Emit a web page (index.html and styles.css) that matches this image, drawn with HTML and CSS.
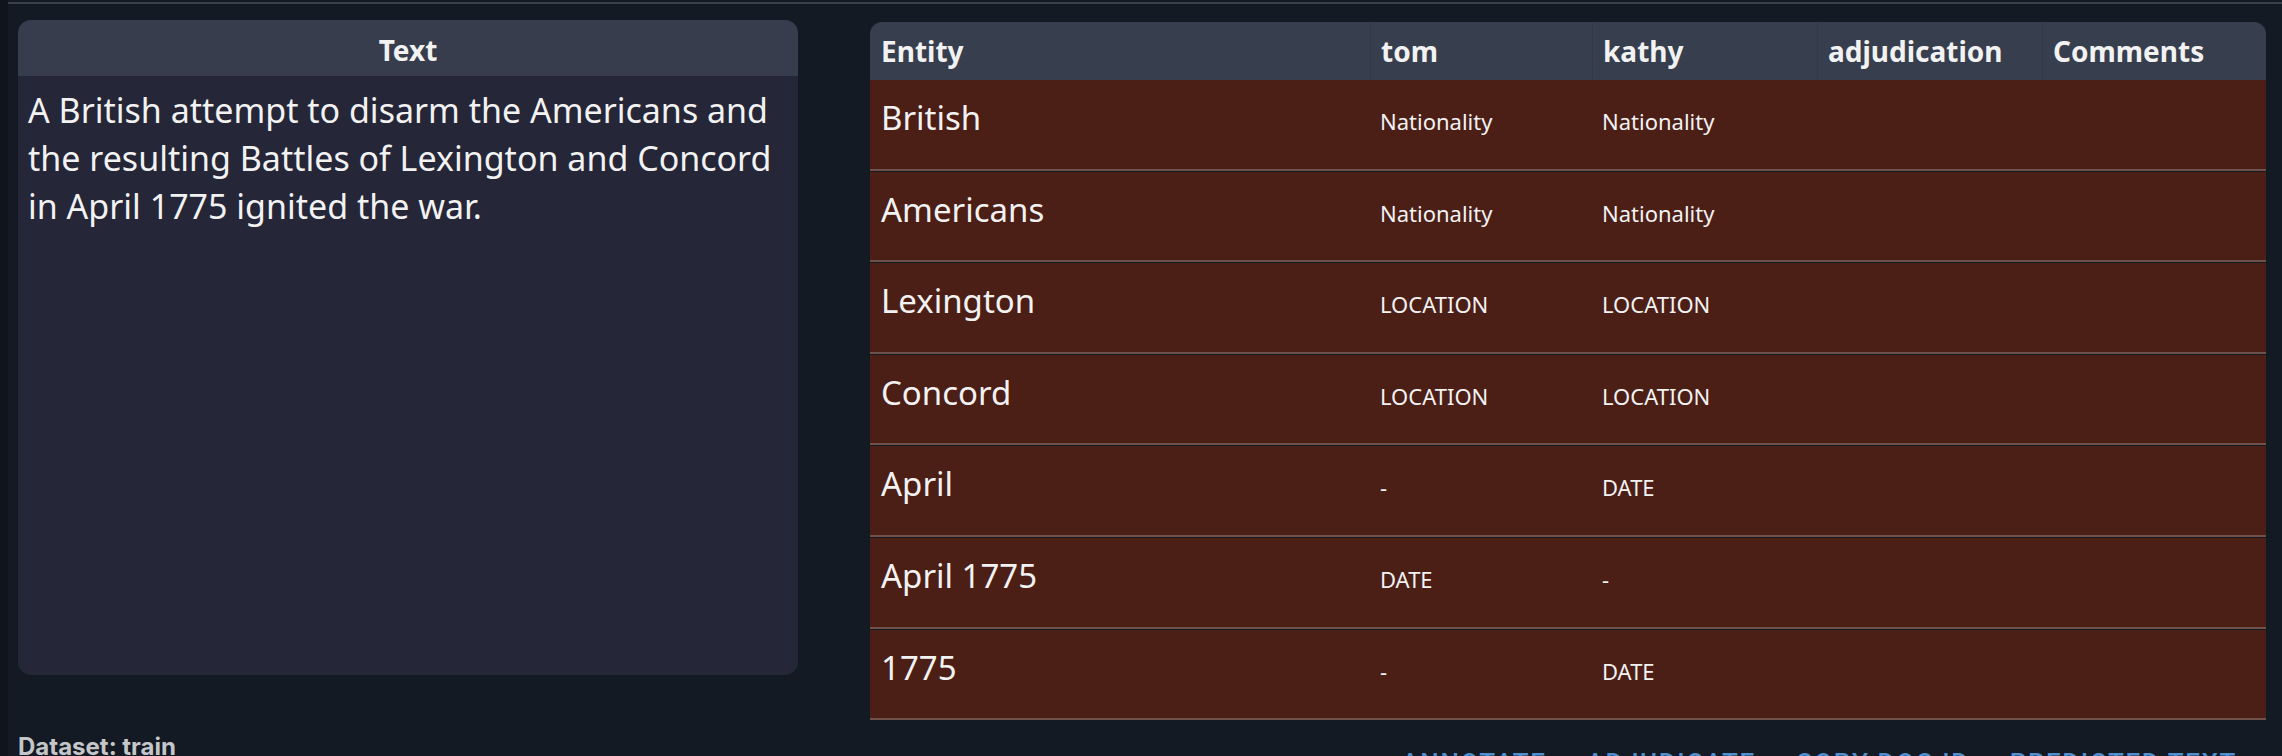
FILE: index.html
```html
<!DOCTYPE html>
<html lang="en">
<head>
  <meta charset="UTF-8">
  <title>Entity review</title>
  <link rel="stylesheet" href="styles.css">
</head>
<body>
  <div class="strip"></div>
  <div class="main">
    <div class="topbar"></div>
    <div class="content">
      <div class="left">
        <div class="card">
          <div class="card-head">Text</div>
          <div class="card-body">A British attempt to disarm the Americans and the resulting Battles of Lexington and Concord in April 1775 ignited the war.</div>
        </div>
        <div class="dataset">Dataset: train</div>
      </div>

      <div class="right">
        <table class="entities">
          <colgroup>
            <col style="width:500px">
            <col style="width:222px">
            <col style="width:225px">
            <col style="width:225px">
            <col>
          </colgroup>
          <thead>
            <tr><th>Entity</th><th>tom</th><th>kathy</th><th>adjudication</th><th>Comments</th></tr>
          </thead>
          <tbody>
            <tr><td class="ent">British</td><td>Nationality</td><td>Nationality</td><td></td><td></td></tr>
            <tr><td class="ent">Americans</td><td>Nationality</td><td>Nationality</td><td></td><td></td></tr>
            <tr><td class="ent">Lexington</td><td>LOCATION</td><td>LOCATION</td><td></td><td></td></tr>
            <tr><td class="ent">Concord</td><td>LOCATION</td><td>LOCATION</td><td></td><td></td></tr>
            <tr><td class="ent">April</td><td>-</td><td>DATE</td><td></td><td></td></tr>
            <tr><td class="ent">April 1775</td><td>DATE</td><td>-</td><td></td><td></td></tr>
            <tr><td class="ent">1775</td><td>-</td><td>DATE</td><td></td><td></td></tr>
          </tbody>
        </table>
        <div class="actions">
          <button class="link-btn">Annotate</button>
          <button class="link-btn">Adjudicate</button>
          <button class="link-btn">Copy Doc ID</button>
          <button class="link-btn">Predicted Text</button>
        </div>
      </div>
    </div>
  </div>
</body>
</html>
```

FILE: styles.css
```css
* {
  box-sizing: border-box;
}

body {
  margin: 0;
  height: 756px;
  overflow: hidden;
  display: flex;
  background: #141a23;
  color: #f2f2f2;
  font-family: "Noto Sans", sans-serif;
}

.strip {
  width: 8px;
  flex-shrink: 0;
  background: #10151b;
}

.main {
  flex: 1;
}

.topbar {
  height: 2px;
  margin-top: 2px;
  background: #39404c;
}

.content {
  display: flex;
  gap: 72px;
  padding: 16px 16px 0 10px;
}

/* left column */
.left {
  width: 780px;
  flex-shrink: 0;
}

.card {
  height: 655px;
  background: #252637;
  border-radius: 13px;
  overflow: hidden;
}

.card-head {
  height: 56px;
  padding-top: 4px;
  line-height: 52px;
  text-align: center;
  font-size: 28px;
  font-weight: 700;
  background: #373d4c;
}

.card-body {
  padding: 10px 10px;
  font-size: 34px;
  line-height: 48px;
}

.dataset {
  margin-top: 57px;
  font-family: Inter, sans-serif;
  font-weight: 700;
  font-size: 24px;
  color: #c4c6ca;
}

/* right column */
.right {
  flex: 1;
  margin-top: 2px;
}

.entities {
  width: 1396px;
  table-layout: fixed;
  border-collapse: separate;
  border-spacing: 0;
}

.entities th {
  height: 58px;
  padding: 0 11px;
  line-height: 58px;
  text-align: left;
  font-size: 28px;
  font-weight: 700;
  background: #373e4e;
}

.entities th + th {
  border-left: 1px solid #333948;
  padding-left: 10px;
}

.entities th:first-child {
  border-top-left-radius: 12px;
}

.entities th:last-child {
  border-top-right-radius: 12px;
}

.entities td {
  box-sizing: content-box;
  height: 73.6px;
  padding: 15px 10px 0;
  vertical-align: baseline;
  font-size: 22px;
  background: #4b1e16;
  border-bottom: 2px solid #6f504a;
}

.entities tbody tr + tr td {
  border-top: 1px solid #141a23;
}

.entities td.ent {
  padding-left: 11px;
  font-size: 33px;
}

.actions {
  display: flex;
  justify-content: flex-end;
  gap: 40px;
  margin-top: 28px;
  padding-right: 29px;
}

.link-btn {
  padding: 0;
  border: none;
  background: none;
  font-family: Roboto, sans-serif;
  font-weight: 500;
  font-size: 26px;
  letter-spacing: 1.6px;
  text-transform: uppercase;
  color: #4f8fd0;
  cursor: pointer;
}
```
